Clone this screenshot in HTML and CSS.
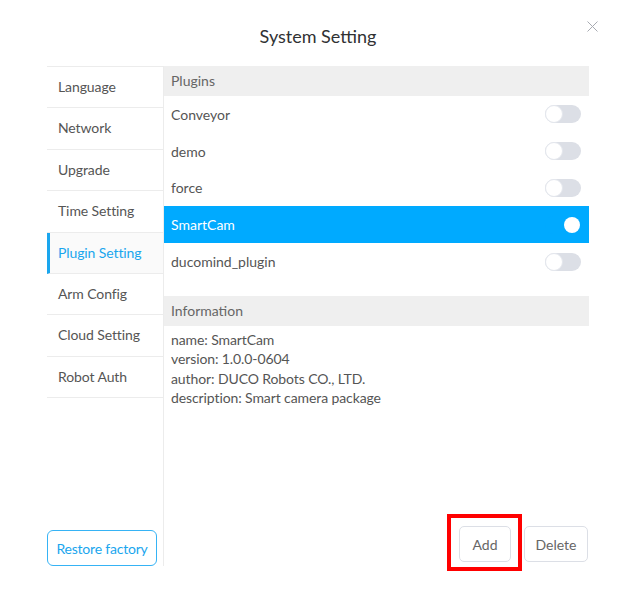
FILE: index.html
```html
<!DOCTYPE html>
<html>

<head>
    <title>System Setting</title>
    <link rel="stylesheet" href="styles.css">
</head>

<body>
    <div class="dialog">
        <div class="dialog-header">
            <span class="dialog-title">System Setting</span>
            <svg class="close-btn" width="11" height="11" viewBox="0 0 11 11">
                <path d="M0.5 0.5 L10.5 10.5 M10.5 0.5 L0.5 10.5" stroke="#a8abb2" stroke-width="1" fill="none" />
            </svg>
        </div>
        <div class="dialog-body">
            <div class="side-menu">
                <ul class="menu-list">
                    <li class="menu-item">Language</li>
                    <li class="menu-item">Network</li>
                    <li class="menu-item">Upgrade</li>
                    <li class="menu-item">Time Setting</li>
                    <li class="menu-item active">Plugin Setting</li>
                    <li class="menu-item">Arm Config</li>
                    <li class="menu-item">Cloud Setting</li>
                    <li class="menu-item">Robot Auth</li>
                </ul>
                <button class="restore-btn">Restore factory</button>
            </div>
            <div class="content">
                <div class="section-title">Plugins</div>
                <ul class="plugin-list">
                    <li class="plugin-row"><span>Conveyor</span><span class="switch"></span></li>
                    <li class="plugin-row"><span>demo</span><span class="switch"></span></li>
                    <li class="plugin-row"><span>force</span><span class="switch"></span></li>
                    <li class="plugin-row selected"><span>SmartCam</span><span class="switch on"></span></li>
                    <li class="plugin-row"><span>ducomind_plugin</span><span class="switch"></span></li>
                </ul>
                <div class="section-title info-title">Information</div>
                <div class="info-text">
                    <div>name: SmartCam</div>
                    <div>version: 1.0.0-0604</div>
                    <div>author: DUCO Robots CO., LTD.</div>
                    <div>description: Smart camera package</div>
                </div>
                <div class="actions">
                    <span class="add-wrap">
                        <button class="btn add-btn">Add</button>
                        <span class="highlight"></span>
                    </span>
                    <button class="btn delete-btn">Delete</button>
                </div>
            </div>
        </div>
    </div>
</body>

</html>
```

FILE: styles.css
```css
body {
    margin: 0;
    background: #fff;
    font-family: "Lato", "Noto Sans", sans-serif;
    font-size: 14px;
    color: #606266;
}

.dialog {
    width: 632px;
    height: 601px;
    box-sizing: border-box;
    padding: 0 43px 35px 47px;
    display: flex;
    flex-direction: column;
}

.dialog-header {
    position: relative;
    height: 66px;
    display: flex;
    align-items: center;
    justify-content: center;
    box-sizing: border-box;
    padding-top: 6px;
}

.dialog-title {
    font-size: 18px;
    color: #303133;
}

.close-btn {
    position: absolute;
    right: -9px;
    top: 21px;
}

.dialog-body {
    flex: 1;
    display: flex;
}

.side-menu {
    width: 116px;
    border-right: 1px solid #ececec;
    display: flex;
    flex-direction: column;
}

.menu-list {
    list-style: none;
    margin: 0;
    padding: 0;
    border-top: 1px solid #ececec;
}

.menu-item {
    height: 40.4px;
    line-height: 40px;
    padding-left: 11px;
    border-bottom: 1px solid #ececec;
    color: #555;
    letter-spacing: -0.1px;
}

.menu-item.active {
    color: #1aa6ee;
    background: #fafafa;
    border-left: 3px solid #1aa6ee;
    padding-left: 8px;
}

.restore-btn {
    margin-top: auto;
    width: 110px;
    height: 36px;
    border: 1px solid #36b3f5;
    border-radius: 6px;
    background: #fff;
    color: #1aa6ee;
    font-family: inherit;
    font-size: 14px;
    letter-spacing: -0.2px;
    padding: 0;
}

.content {
    flex: 1;
    display: flex;
    flex-direction: column;
}

.section-title {
    height: 30px;
    line-height: 30px;
    background: #efefef;
    padding-left: 7px;
    color: #666;
}

.plugin-list {
    list-style: none;
    margin: 0;
    padding: 0;
}

.plugin-row {
    height: 36.8px;
    display: flex;
    align-items: center;
    justify-content: space-between;
    padding: 0 8px 0 7px;
    color: #555;
}

.plugin-row.selected {
    background: #00aaff;
    color: #fff;
}

.switch {
    position: relative;
    width: 36px;
    height: 18px;
    border-radius: 9px;
    background: #dcdfe6;
}

.switch::after {
    content: "";
    position: absolute;
    left: 0;
    top: 0;
    width: 16px;
    height: 16px;
    border: 1px solid #e4e7ed;
    border-radius: 50%;
    background: #fff;
}

.switch.on {
    background: #00aaff;
}

.switch.on::after {
    left: auto;
    right: 1px;
    top: 1px;
    width: 16px;
    height: 16px;
    border: none;
}

.info-title {
    margin-top: 16px;
}

.info-text {
    padding: 4px 7px 0;
    line-height: 19.5px;
    color: #555;
    letter-spacing: -0.1px;
}

.actions {
    margin-top: auto;
    margin-bottom: 4px;
    margin-right: 1px;
    display: flex;
    justify-content: flex-end;
    gap: 13px;
}

.add-wrap {
    position: relative;
    display: flex;
}

.btn {
    height: 36px;
    padding: 0;
    border: 1px solid #dcdfe6;
    border-radius: 5px;
    background: #fff;
    color: #666;
    font-family: inherit;
    font-size: 14px;
}

.add-btn {
    width: 52px;
}

.delete-btn {
    width: 64px;
}

.highlight {
    position: absolute;
    left: -12px;
    right: -11px;
    top: -12px;
    bottom: -9px;
    border: 4px solid #f00;
}
```
